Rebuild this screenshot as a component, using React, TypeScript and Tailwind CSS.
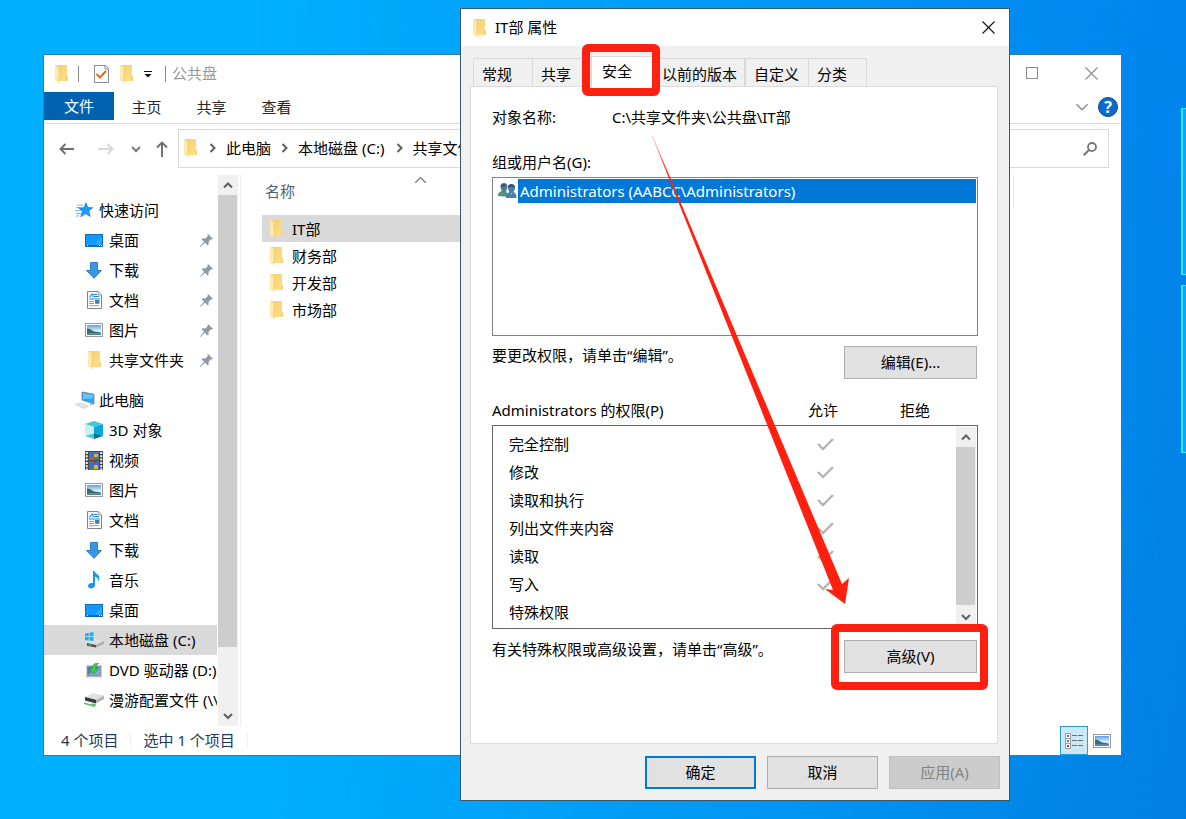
import type { ReactNode } from "react";

const FONT = "font-['Noto_Sans','Noto_Sans_CJK_SC',sans-serif]";

/* ---------- Icons ---------- */

function FolderIcon() {
    return (
        <svg width="13" height="18" viewBox="0 0 13 18" className="shrink-0" aria-hidden="true">
            <defs>
                <linearGradient id="folderBack" x1="0" x2="1" y1="0" y2="1">
                    <stop offset="0" stopColor="#f3cf71" />
                    <stop offset="1" stopColor="#ffe08a" />
                </linearGradient>
            </defs>
            <path d="M1 0h11v11l1 1v4H3z" fill="url(#folderBack)" />
            <path d="M0 0l4 2.5V18L0 15.5z" fill="#ffeaae" />
            <path d="M4 2.5V18" stroke="#eec869" strokeWidth=".6" />
            <path d="M12 11v5" stroke="#e6bf60" strokeWidth=".7" />
        </svg>
    );
}

function StarIcon() {
    return (
        <svg width="18" height="16" viewBox="0 0 18 16" aria-hidden="true">
            <path d="M2 3.2h6M1 5.6h4.5M0 8.800h6M1 11.500h5M1 14h3" stroke="#65bdf7" strokeWidth="1" />
            <path d="M11 .8l1.700 4.700 5 .2-3.900 3.200 1.400 5.600-4.600-2.900-4.800 3.200 1.600-5.500L3.800 6l5.200-.3z" fill="#1f98f4" stroke="#1277cc" strokeWidth=".7" />
        </svg>
    );
}

function DesktopIcon() {
    return (
        <svg width="18" height="13" viewBox="0 0 18 13" aria-hidden="true">
            <rect x=".5" y=".5" width="17" height="12" fill="#1299ff" stroke="#0a6ebd" />
            <path d="M9 11L16.800 3v8z" fill="#2fa6ff" />
            <path d="M1 11.600h16" stroke="#0866b0" strokeWidth="1.200" />
            <path d="M2 11.500h1M14 11.500h1M16 11.500h1" stroke="#fff" />
        </svg>
    );
}

function DownloadIcon() {
    return (
        <svg width="16" height="17" viewBox="0 0 16 17" aria-hidden="true">
            <path d="M4.500.5h7v8h4L8 16.300.5 8.500h4z" fill="#3a95e6" stroke="#2475c2" strokeWidth=".9" />
        </svg>
    );
}

function DocumentIcon() {
    return (
        <svg width="15" height="18" viewBox="0 0 15 18" aria-hidden="true">
            <path d="M.5.5h10.700l3.300 3.300v13.700H.5z" fill="#fff" stroke="#858585" />
            <path d="M11 .5V4h3.500" fill="#e8e8e8" stroke="#858585" strokeWidth=".8" />
            <path d="M2.500 6.500L5 3h1v3.500M7 3.500h3M7 5.500h5M2 8h11" stroke="#2387d8" strokeWidth="1.100" fill="none" />
            <path d="M2 10.500h5M2 12.500h5M2 14.700h10" stroke="#999" />
            <rect x="8" y="9" width="4.500" height="3.400" fill="#3f7fbf" />
            <path d="M8 12.400l2-1.600 2.500 1.600z" fill="#4a7b45" />
        </svg>
    );
}

function PictureIcon() {
    return (
        <svg width="18" height="14" viewBox="0 0 18 14" aria-hidden="true">
            <defs>
                <linearGradient id="pictureSky" x2="0" y2="1">
                    <stop offset="0" stopColor="#5e9fea" />
                    <stop offset=".6" stopColor="#dff2fb" />
                    <stop offset="1" stopColor="#5b93c4" />
                </linearGradient>
            </defs>
            <rect x=".5" y=".5" width="17" height="13" fill="#fff" stroke="#9b9b9b" />
            <rect x="2" y="2" width="14" height="10" fill="url(#pictureSky)" />
            <path d="M2 5.200l3 .8 4 2.400 5 .8 2 .8H2z" fill="#3c6f62" />
            <path d="M2 10h14v2H2z" fill="#4f86b5" />
        </svg>
    );
}

function ComputerIcon() {
    return (
        <svg width="20" height="18" viewBox="0 0 20 18" aria-hidden="true">
            <path d="M7 1l12 2.200v9.600L7 9z" fill="#31a5f6" stroke="#75899a" strokeWidth=".9" />
            <path d="M8 2.200l10 1.800v3.600L8 8z" fill="#66c2ff" />
            <path d="M11 11l4 1.300v2.200l4-1-2.500-1.300" fill="#aab3bb" />
            <path d="M0 13.400l5.500-1.200 8 3-4.500 2.200z" fill="#e3e6e8" stroke="#bcc2c7" strokeWidth=".6" />
        </svg>
    );
}

function CubeIcon() {
    return (
        <svg width="18" height="18" viewBox="0 0 18 18" aria-hidden="true">
            <path d="M9 0l9 3-9 3-9-3z" fill="#43c7d9" />
            <path d="M0 3l9 3v7l-9 2z" fill="#c5f2f3" />
            <path d="M18 3L9 6v7l9 2z" fill="#0aa6dd" />
            <path d="M0 15l9-2.500v5.500z" fill="#47cad8" />
            <path d="M18 15l-9-2.500v5.500z" fill="#08718f" />
        </svg>
    );
}

function VideoIcon() {
    return (
        <svg width="18" height="19" viewBox="0 0 18 19" aria-hidden="true">
            <rect width="18" height="19" fill="#484848" />
            <path d="M1.800 1v18M16.200 1v18" stroke="#f2f2f2" strokeWidth="2" strokeDasharray="2 1.300" />
            <rect x="4" y="1" width="10" height="8" fill="#416fc8" />
            <rect x="4" y="10" width="10" height="9" fill="#416fc8" />
            <path d="M9 3h4v3H9zM9 14h4v4H9z" fill="#e8b12d" />
            <path d="M4 7h5v2H4z" fill="#d8512f" />
            <path d="M9 6h4v3H9zM5 16h4v2H5z" fill="#3d8d3c" />
            <path d="M7 10h5l-2 3z" fill="#b43a27" />
        </svg>
    );
}

function MusicIcon() {
    return (
        <svg width="12" height="18" viewBox="0 0 12 18" aria-hidden="true">
            <path d="M5 0h1.500c.5 2.800 5.200 3.400 4.800 7.200-.1 1.500-.7 2.500-1.200 3.100.4-2.700-1.200-4-3.100-4.700V14c0 2.100-2 3.400-4 3.400C1.300 17.400 0 16.400 0 15c0-2.200 2.700-3.600 5-2.900z" fill="#1497f0" />
        </svg>
    );
}

function DiskIcon() {
    return (
        <svg width="19" height="16" viewBox="0 0 19 16" aria-hidden="true">
            <path d="M2 11l8-4 9 2-8 4.500z" fill="#dfdfdf" />
            <path d="M2 11l9 2v2.500l-9-1.800z" fill="#4b4f4c" />
            <path d="M11 13l8-4v2.600l-8 4z" fill="#aaa" />
            <path d="M3.500 12.800l3 .6" stroke="#58d158" />
            <path d="M0 1.500l3.700-.6v3.400H0zM4.500.8L8.500 0v4.300h-4zM0 5h3.700v3.400L0 8zM4.500 5h4v4l-4-.6z" fill="#0fb5f4" />
        </svg>
    );
}

function DvdIcon() {
    return (
        <svg width="16" height="15" viewBox="0 0 16 15" aria-hidden="true">
            <rect x="1" y="3" width="14" height="10" fill="#5c7da6" stroke="#a0a7ad" />
            <path d="M2 12l12-8v8z" fill="#86a9d0" />
            <path d="M0 13.800h16" stroke="#a9afb5" />
            <path d="M13 .2C8.500-.2 6 2 6 6H3l5 5 4.500-5H9.500c0-2.500 1-4 3.500-5.800z" fill="#35d34a" stroke="#1c9b36" strokeWidth=".6" />
        </svg>
    );
}

function NetworkDriveIcon() {
    return (
        <svg width="20" height="14" viewBox="0 0 20 14" aria-hidden="true">
            <path d="M1 4l8-4 11 2.500-8 4.200z" fill="#e2e2e2" />
            <path d="M1 4l11 2.700v3.800L1 7.500z" fill="#383d3a" />
            <path d="M12 6.700l8-4.200v3.700l-8 4.300z" fill="#b5b5b5" />
            <path d="M0 9.500l8 2v-1.200l4 1-1 2.700-4-1-7-2z" fill="#69ba70" />
        </svg>
    );
}

function PinIcon() {
    return (
        <svg width="13" height="13" viewBox="0 0 13 13" aria-hidden="true">
            <path d="M8 0l5 4.700-1.100.8-.9-.3-2.500 2.700.2 2.500-1 1L4.900 8.700.5 13l-.5-.4L4 7.800 1.600 5.200l1-.9 2.700.2L7.900 2l-.5-1z" fill="#8e9aa4" />
        </svg>
    );
}

function UsersIcon() {
    return (
        <svg width="19" height="16" viewBox="0 0 19 16" className="shrink-0" aria-hidden="true">
            <path d="M0 13c0-3.500 1.700-4.500 4-5h4l3 6z" fill="#509582" />
            <path d="M2.500 3C2.500 1 4 0 6 0s3.500 1 3.500 3.500S8 9 6 9 2.500 6 2.500 3z" fill="#547c8e" />
            <path d="M2.500 3.500c1-3 4-3 5.500-2L6.500 4z" fill="#31566b" />
            <path d="M8 15c0-4.500 1.700-5.500 4-6h3c2 .5 3.500 2 3.500 6z" fill="#487fae" />
            <path d="M10 4.500c0-2.500 1.500-3.500 3.500-3.500S17 2.500 17 4.500 15.500 10 13.500 10 10 7 10 4.500z" fill="#527ba5" />
            <path d="M10 4.500c0-4 6.500-4.500 7 0l-3-1z" fill="#284c74" />
            <path d="M12.500 10l1 2 1-2z" fill="#8fb4d0" />
        </svg>
    );
}

function Chevron({ dir, size = 10, width = 2, color = "#606060" }: { dir: "up" | "down" | "right"; size?: number; width?: number; color?: string }) {
    const paths = { up: "M1 7.500L5 3.500l4 4", down: "M1 3l4 4 4-4", right: "M3.500 1l4 4-4 4" };
    return (
        <svg width={size} height={size} viewBox="0 0 10 10" className="shrink-0" aria-hidden="true">
            <path d={paths[dir]} fill="none" stroke={color} strokeWidth={width} />
        </svg>
    );
}

function CloseIcon({ color }: { color: string }) {
    return (
        <svg width="13" height="13" viewBox="0 0 13 13" aria-hidden="true">
            <path d="M.5.5l12 12M12.500.5l-12 12" stroke={color} strokeWidth="1.100" />
        </svg>
    );
}

function ArrowIcon({ dir, color }: { dir: "left" | "right" | "up"; color: string }) {
    const paths = {
        left: "M6.500 3L1.500 8l5 5M1.500 8H15",
        right: "M9.500 3l5 5-5 5M14.500 8H0",
        up: "M3 6.500l5-5 5 5M8 1.500V16",
    };
    return (
        <svg width="16" height="16" viewBox="0 0 16 16" aria-hidden="true">
            <path d={paths[dir]} fill="none" stroke={color} strokeWidth="1.900" />
        </svg>
    );
}

/* ---------- Data ---------- */

interface NavItem {
    label: string;
    icon: ReactNode;
    pinned?: boolean;
    selected?: boolean;
}

const quickAccess: NavItem[] = [
    { label: "桌面", icon: <DesktopIcon />, pinned: true },
    { label: "下载", icon: <DownloadIcon />, pinned: true },
    { label: "文档", icon: <DocumentIcon />, pinned: true },
    { label: "图片", icon: <PictureIcon />, pinned: true },
    { label: "共享文件夹", icon: <FolderIcon />, pinned: true },
];

const thisPc: NavItem[] = [
    { label: "3D 对象", icon: <CubeIcon /> },
    { label: "视频", icon: <VideoIcon /> },
    { label: "图片", icon: <PictureIcon /> },
    { label: "文档", icon: <DocumentIcon /> },
    { label: "下载", icon: <DownloadIcon /> },
    { label: "音乐", icon: <MusicIcon /> },
    { label: "桌面", icon: <DesktopIcon /> },
    { label: "本地磁盘 (C:)", icon: <DiskIcon />, selected: true },
    { label: "DVD 驱动器 (D:)", icon: <DvdIcon /> },
    { label: "漫游配置文件 (\\\\", icon: <NetworkDriveIcon /> },
];

const folders = ["IT部", "财务部", "开发部", "市场部"];

const permissions = [
    { name: "完全控制", allow: true },
    { name: "修改", allow: true },
    { name: "读取和执行", allow: true },
    { name: "列出文件夹内容", allow: true },
    { name: "读取", allow: true },
    { name: "写入", allow: true },
    { name: "特殊权限", allow: false },
];

/* ---------- Shared pieces ---------- */

function ScrollBar({ thumb }: { thumb: string }) {
    return (
        <div className="flex w-5 shrink-0 flex-col bg-[#f0f0f0]">
            <button aria-label="向上滚动" className="flex h-5 w-full shrink-0 items-center justify-center">
                <Chevron dir="up" />
            </button>
            <div className="min-h-0 flex-1 pr-px">
                <div className={`bg-[#cdcdcd] ${thumb}`} />
            </div>
            <button aria-label="向下滚动" className="flex h-5 w-full shrink-0 items-center justify-center">
                <Chevron dir="down" />
            </button>
        </div>
    );
}

function NavGroup({ title, icon, items }: { title: string; icon: ReactNode; items: NavItem[] }) {
    return (
        <div>
            <a href="#" className="flex h-[30px] items-center pl-[31px]">
                <span className="flex w-6 shrink-0">{icon}</span>
                {title}
            </a>
            {items.map((item) => (
                <a
                    key={item.label}
                    href="#"
                    className={`flex h-[30px] items-center pl-10 ${item.selected ? "bg-[#d9d9d9]" : ""}`}
                >
                    <span className="mr-[5px] flex w-5 shrink-0 justify-center">{item.icon}</span>
                    <span className="flex-1 whitespace-nowrap">{item.label}</span>
                    {item.pinned && <span className="mr-1"><PinIcon /></span>}
                </a>
            ))}
        </div>
    );
}

/* ---------- Explorer window ---------- */

function Explorer() {
    return (
        <section
            aria-label="公共盘"
            className="absolute top-[54px] right-16 left-[43px] flex flex-col border border-[#2b7fae] bg-white"
        >
            <header className="flex h-[37px] items-center pl-[11px]">
                <FolderIcon />
                <span className="ml-2.5 h-4 w-px bg-[#8a8a8a]" />
                <svg width="15" height="18" viewBox="0 0 15 18" className="ml-[15px]" aria-hidden="true">
                    <path d="M.5.5h11l3 3v14H.5z" fill="#fafafa" stroke="#8c8c8c" />
                    <path d="M11 .5V4h3.500" fill="none" stroke="#8c8c8c" />
                    <path d="M2.500 9l3.500 3.500L12 6" fill="none" stroke="#ec6214" strokeWidth="1.900" />
                </svg>
                <span className="ml-[11px]"><FolderIcon /></span>
                <button aria-label="自定义快速访问工具栏" className="ml-[11px]">
                    <svg width="8" height="8" viewBox="0 0 8 8" aria-hidden="true">
                        <path d="M0 1.500h8" stroke="#111" />
                        <path d="M.5 4h7L4 7.500z" fill="#111" />
                    </svg>
                </button>
                <span className="ml-[13px] h-4 w-px bg-[#8a8a8a]" />
                <h1 className="ml-1.5 pb-0.5 text-[#999]">公共盘</h1>
                <div className="mr-[23px] ml-auto flex gap-[47px]">
                    <button aria-label="最大化" className="size-3 border border-[#8b8b8b]" />
                    <button aria-label="关闭"><CloseIcon color="#8b8b8b" /></button>
                </div>
            </header>

            <nav className="flex h-8 items-start border-b border-[#dadbdc] text-[#262626]">
                <button className="h-7 w-[70px] bg-[#0063b1] text-white">文件</button>
                <button className="h-[30px] w-[65px]">主页</button>
                <button className="h-[30px] w-[65px]">共享</button>
                <button className="h-[30px] w-[65px]">查看</button>
                <div className="mt-[5px] mr-[3px] ml-auto flex items-center gap-[9px]">
                    <Chevron dir="down" size={14} width={1} color="#8b8b8b" />
                    <button aria-label="帮助" className="size-5 rounded-full border border-[#0a4b87] bg-[#0a6cce] text-base leading-4 font-bold text-white">?</button>
                </div>
            </nav>

            <div className="flex items-center py-[5px] pr-3 pl-[15px]">
                <button aria-label="后退"><ArrowIcon dir="left" color="#6f6f6f" /></button>
                <button aria-label="前进" className="ml-[23px]"><ArrowIcon dir="right" color="#d8d8d8" /></button>
                <button aria-label="最近" className="ml-[17px]"><Chevron dir="down" color="#7a7a7a" /></button>
                <button aria-label="上移" className="ml-[13px]"><ArrowIcon dir="up" color="#6f6f6f" /></button>
                <div className="ml-2 flex h-[39px] flex-1 items-center border border-[#d9d9d9] pb-0.5 pl-[5px]">
                    <FolderIcon />
                    <span className="ml-2.5"><Chevron dir="right" /></span>
                    <button className="ml-[9px]">此电脑</button>
                    <span className="ml-2"><Chevron dir="right" /></span>
                    <button className="ml-[9px]">本地磁盘 (C:)</button>
                    <span className="ml-2.5"><Chevron dir="right" /></span>
                    <button className="ml-2">共享文件夹</button>
                </div>
                <div className="flex h-[39px] w-[200px] items-center border border-l-0 border-[#d9d9d9]">
                    <input type="search" aria-label="搜索" className="min-w-0 flex-1 outline-none" />
                    <svg width="14" height="14" viewBox="0 0 14 14" className="mr-[11px]" aria-hidden="true">
                        <circle cx="9" cy="5" r="4" fill="none" stroke="#777" strokeWidth="1.800" />
                        <path d="M6 8L.7 13.300" stroke="#777" strokeWidth="2" />
                    </svg>
                </div>
            </div>

            <div className="mt-0.5 flex">
                <aside className="flex h-[551px] w-[197px] shrink-0 border-r border-[#efefef]">
                    <div className="mr-px flex min-w-0 flex-1 flex-col gap-2.5 overflow-hidden pt-5 text-black">
                        <NavGroup title="快速访问" icon={<StarIcon />} items={quickAccess} />
                        <NavGroup title="此电脑" icon={<ComputerIcon />} items={thisPc} />
                    </div>
                    <div className="mr-0.5 flex">
                        <ScrollBar thumb="h-[452px]" />
                    </div>
                </aside>
                <table className="ml-[21px] h-fit flex-1 border-collapse text-left">
                    <thead>
                        <tr className="h-10 align-top font-normal text-[#4c607a]">
                            <th className="flex pt-1.5 pl-[3px] font-normal">
                                名称
                                <span className="-mt-2 ml-[119px]"><Chevron dir="up" size={13} width={1} color="#777" /></span>
                            </th>
                            <th className="w-[120px] p-0 pl-3">
                                <div className="h-8 border-l border-[#e5e5e5]" />
                            </th>
                        </tr>
                    </thead>
                    <tbody>
                        {folders.map((name, i) => (
                            <tr key={name} className="h-[27px]">
                                <td className={`p-0 pl-2 ${i === 0 ? "bg-[#d9d9d9]" : ""}`}>
                                    <a href="#" className="flex items-center gap-[9px]"><FolderIcon />{name}</a>
                                </td>
                                <td className="p-0" />
                            </tr>
                        ))}
                    </tbody>
                </table>
            </div>

            <footer className="flex h-[29px] items-center pl-[17px] text-[#1e395b]">
                <span className="pb-0.5">4 个项目</span>
                <span className="mx-3 h-4 w-px bg-[#efefef]" />
                <span className="pb-0.5">选中 1 个项目</span>
                <span className="ml-3 h-4 w-px bg-[#efefef]" />
                <div className="mr-2.5 ml-auto flex items-center gap-[5px]">
                    <button aria-label="详细信息" className="flex h-[29px] w-7 items-center justify-center border border-[#26a0da] bg-[#cbe8f6]">
                        <svg width="18" height="16" viewBox="0 0 18 16" aria-hidden="true">
                            <path d="M.5.5h5v5h-5zM.5 5.500h5v5h-5zM.5 10.500h5v5h-5z" fill="#fff" stroke="#999" />
                            <path d="M2 3h2" stroke="#487f83" strokeWidth="2" />
                            <path d="M2 8h2" stroke="#5577c9" strokeWidth="2" />
                            <path d="M2 13h2" stroke="#c33321" strokeWidth="2" />
                            <path d="M7 2.500h5M13 2.500h5M7 7.500h5M13 7.500h5M7 12.500h5M13 12.500h5" stroke="#707070" />
                        </svg>
                    </button>
                    <button aria-label="大图标"><PictureIcon /></button>
                </div>
            </footer>
        </section>
    );
}

/* ---------- Properties dialog ---------- */

const tabBase = "h-7 shrink-0 border border-b-0 border-[#d9d9d9] pt-0.5 pl-2 text-left";
const dialogButton = "h-[33px] border pb-0.5 text-center";

function PropertiesDialog() {
    return (
        <section
            role="dialog"
            aria-label="IT部 属性"
            className="absolute top-2 left-[460px] w-[550px] border border-[#35586e] bg-[#f0f0f0] text-black"
        >
            <header className="flex h-[37px] items-center bg-white pr-[14px] pl-3">
                <FolderIcon />
                <h2 className="ml-[9px] pb-0.5">IT部 属性</h2>
                <button aria-label="关闭" className="ml-auto"><CloseIcon color="#111" /></button>
            </header>

            <div className="pt-[10px] pr-[11px] pl-[9px]">
                <div role="tablist" className="flex h-[30px] items-end pl-[3px]">
                    <button role="tab" className={`${tabBase} w-[60px]`}>常规</button>
                    <button role="tab" className={`${tabBase} -ml-px w-[60px]`}>共享</button>
                    <button role="tab" aria-selected="true" className="relative z-10 -mb-px -ml-px h-[31px] w-[63px] shrink-0 border border-b-0 border-[#d9d9d9] bg-white pb-0.5 pl-2.5 text-left">
                        安全
                        <span className="absolute -top-[13px] -left-[10px] h-[52px] w-[78px] rounded-md border-8 border-[#ff2010]" />
                    </button>
                    <button role="tab" className={`${tabBase} -ml-px w-[92px]`}>以前的版本</button>
                    <button role="tab" className={`${tabBase} w-16`}>自定义</button>
                    <button role="tab" className={`${tabBase} -ml-px w-[59px]`}>分类</button>
                </div>

                <div role="tabpanel" className="border border-[#dcdcdc] bg-white pt-[15px] pr-[19px] pb-[70px] pl-[21px]">
                    <div className="flex h-[30px] items-center">
                        <span className="w-[120px]">对象名称:</span>
                        <span>C:\共享文件夹\公共盘\IT部</span>
                    </div>

                    <div id="groups-label" className="mt-4 flex h-7 items-center">组或用户名(G):</div>
                    <ul role="listbox" aria-labelledby="groups-label" className="mt-px h-[159px] border border-[#828282] p-px">
                        <li role="option" aria-selected="true" className="flex h-6 items-center pl-1">
                            <UsersIcon />
                            <span className="ml-px flex h-full flex-1 items-center bg-[#0078d7] pl-0.5 text-white">
                                Administrators (AABCC\Administrators)
                            </span>
                        </li>
                    </ul>

                    <div className="mt-2.5 flex justify-between pr-px">
                        <p className="-mt-px">要更改权限，请单击“编辑”。</p>
                        <button className={`${dialogButton} w-[133px] border-[#adadad] bg-[#e1e1e1]`}>编辑(E)...</button>
                    </div>

                    <div className="mt-4 flex h-[30px] items-center">
                        <span className="flex-1">Administrators 的权限(P)</span>
                        <span className="w-[92px]">允许</span>
                        <span className="w-[78px]">拒绝</span>
                    </div>
                    <div className="flex h-[204px] border border-[#646464] p-px">
                        <table aria-label="Administrators 的权限" className="h-fit flex-1 border-collapse">
                            <tbody>
                                {permissions.map((perm) => (
                                    <tr key={perm.name} className="h-7">
                                        <td className="p-0 pt-1.5 pl-[15px]">{perm.name}</td>
                                        <td className="w-[139px] p-0 pt-1.5">
                                            {perm.allow && (
                                                <svg width="17" height="13" viewBox="0 0 17 13" role="img" aria-label="允许">
                                                    <path d="M1 6l5 5L16 1" fill="none" stroke="#b4b4b4" strokeWidth="2.400" />
                                                </svg>
                                            )}
                                        </td>
                                    </tr>
                                ))}
                            </tbody>
                        </table>
                        <ScrollBar thumb="h-[158px]" />
                    </div>

                    <div className="mt-[11px] flex justify-between pr-px">
                        <p className="-mt-px">有关特殊权限或高级设置，请单击“高级”。</p>
                        <button className={`${dialogButton} relative w-[133px] border-[#adadad] bg-[#e1e1e1]`}>
                            高级(V)
                            <span className="absolute -top-[17px] -left-[14px] h-[66px] w-[157px] rounded-md border-8 border-[#ff2010]" />
                        </button>
                    </div>
                </div>
            </div>

            <footer className="flex justify-end gap-[11px] pt-3 pr-[9px] pb-[11px]">
                <button className={`${dialogButton} w-[111px] border-2 border-[#0078d7] bg-[#e1e1e1]`}>确定</button>
                <button className={`${dialogButton} w-[111px] border-[#adadad] bg-[#e1e1e1]`}>取消</button>
                <button disabled className={`${dialogButton} w-[111px] border-[#bfbfbf] bg-[#cccccc] text-[#838383]`}>应用(A)</button>
            </footer>

            {/* Pointer from the object path down to the advanced button */}
            <svg width="198" height="470" viewBox="0 0 198 470" className="pointer-events-none absolute top-[127px] left-[191px]" aria-hidden="true">
                <defs>
                    <linearGradient id="arrowFade" gradientUnits="userSpaceOnUse" x1="0" y1="0" x2="16" y2="38">
                        <stop offset="0" stopColor="#ff2010" stopOpacity=".3" />
                        <stop offset="1" stopColor="#ff2010" />
                    </linearGradient>
                </defs>
                <path d="M0 0h.6L190 448l7-6-4 26-20-15 8 1z" fill="url(#arrowFade)" />
            </svg>
        </section>
    );
}

/* ---------- Desktop ---------- */

export default function App() {
    return (
        <main className={`relative min-h-screen overflow-hidden bg-linear-to-r from-[#00b0ff] from-20% via-[#009cf6] via-65% to-[#0084e8] text-[15px] leading-5 ${FONT}`}>
            <div className="absolute inset-0 bg-linear-to-b from-[#0088ff]/30 via-transparent to-[#006fd0]/20 mask-l-from-0% mask-l-to-80%" />
            {/* Wallpaper window panes at the right edge */}
            <div className="absolute top-[108px] right-0 h-[167px] w-[5px] border-y border-l-2 border-[#2ee6ff] bg-[#12a5f5]" />
            <div className="absolute top-[285px] right-0 h-[168px] w-[5px] border-y border-l-2 border-[#2ee6ff] bg-[#12a5f5]" />
            <Explorer />
            <PropertiesDialog />
        </main>
    );
}
